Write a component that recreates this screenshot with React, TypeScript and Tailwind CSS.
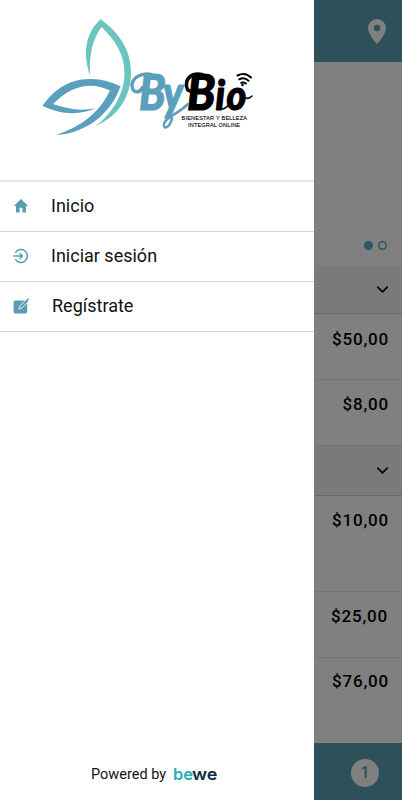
import { ChevronDown } from "lucide-react";

interface Row { price: string; height: string; pad: string; }

const firstGroup: Row[] = [
    { price: "$50,00", height: "h-[66px]", pad: "pt-[13px] pr-[13px]" },
    { price: "$8,00",  height: "h-[66px]", pad: "pt-3 pr-[13px]" },
];

const secondGroup: Row[] = [
    { price: "$10,00", height: "h-24",     pad: "pt-3 pr-[13px]" },
    { price: "$25,00", height: "h-[66px]", pad: "pt-3 pr-3.5" },
    { price: "$76,00", height: "h-[85px]", pad: "pt-[11px] pr-[13px]" },
];

function HomeIcon() {
    return (
        <svg viewBox="0 0 16 16" className="size-4" fill="#5a9db3">
            <path d="M8 1 .8 8H3v6.500h3.600v-4.800h2.800v4.800H13V8h2.200z" />
        </svg>
    );
}

function LoginIcon() {
    return (
        <svg viewBox="0 0 16 16" className="size-4" fill="none" stroke="#5a9db3" strokeWidth="1.5">
            <path d="M2.300 4.800A6.500 6.500 0 1 1 2.300 11.200M.3 8h8.900M6.600 5.200 9.400 8l-2.800 2.800" />
        </svg>
    );
}

function RegisterIcon() {
    return (
        <svg viewBox="0 0 18 18" className="size-[18px]">
            <rect x="1.600" y="3.500" width="13.600" height="13" rx="1.800" fill="#5a9db3" />
            <path d="m6.800 12.200 1.100-3.300 6.600-6.400 2 2-6.500 6.500z" fill="#5a9db3" stroke="#fff" strokeWidth=".8" />
            <path d="m14.400 2.700 1.900-1.500.9.800-1.700 2z" fill="#5a9db3" />
        </svg>
    );
}

function Logo() {
    return (
        <svg viewBox="36 10 224 134" className="ml-9 h-[134px] w-56 shrink-0">
            <path fill="#6cc3bf" d="M100.700 19.300C118 32 131 49 131 72c0 24-12 44-35.500 54C112 114 124.500 94 124.500 73c0-18-9-33-23-46C93 38 88.500 56 90.200 75.500 82 53 86 32 100.700 19.300Z" />
            <path fill="#5aa0be" d="M42.500 105.800C53 91 68 78.500 91 79c11 .2 20 3 29.500 7.200C112 111 89 133 56 135c26-9 43-22 54-44.500-20-10-40-4-57 13.500 14 5 28 7.500 43 4-14 7-35 7.500-53.500-2.200Z" />
            <g fontFamily="Lato, sans-serif" fontStyle="italic" fontWeight="900" strokeWidth="1.200" strokeLinejoin="round">
                <text transform="translate(139 110) scale(.86 1)" fontSize="50" fill="#5aa0be" stroke="#5aa0be">
                    B<tspan x="28" fontSize="47">y</tspan>
                </text>
                <text transform="translate(187 110) scale(.92 1)" fontSize="50" fill="#000" stroke="#000">
                    B<tspan x="31" fontSize="41">i</tspan><tspan x="43" fontSize="41">o</tspan>
                </text>
            </g>
            {/* swashes that lead into each capital, and the joining tails */}
            <g fill="none" strokeLinecap="round">
                <g stroke="#5aa0be">
                    <path d="M151 74.500c-11-2-19 4-19 11 .5 8 8 8 10.500 2" strokeWidth="3.500" />
                    <path d="M172 118c-2 10-9 12-8 6 1-7 13-9 24-20" strokeWidth="2.500" />
                </g>
                <g stroke="#000">
                    <path d="M202 74.500c-11-2-16 4-15.500 11 .5 7 6 7 8.500 2" strokeWidth="3.500" />
                    <path d="M246 98c2 1 4 0 6-2M222 109c3 0 5-2 7-5" strokeWidth="1.500" />
                </g>
            </g>
            <g fill="none" stroke="#000" strokeWidth="2" strokeLinecap="round">
                <path d="M237.500 75.500q7.500-4 13.500 2M239.300 79.300q5-2.500 9.200 1.400M241.300 82.800q2.500-1 4.600 .8" />
            </g>
            <circle cx="242.500" cy="85" r="1.300" />
            <g fontFamily="'Liberation Sans', sans-serif" fontSize="5.500" fill="#000" stroke="#000" strokeWidth=".1">
                <text x="181.500" y="119.500" textLength="65.500">BIENESTAR Y BELLEZA</text>
                <text x="188" y="126.500" textLength="52">INTEGRAL ONLINE</text>
            </g>
        </svg>
    );
}

const menu = [
    { label: "Inicio",         icon: <HomeIcon />,     gap: "pl-[13px] gap-[22px]" },
    { label: "Iniciar sesión", icon: <LoginIcon />,    gap: "pl-[13px] gap-[22px]" },
    { label: "Regístrate",     icon: <RegisterIcon />, gap: "pl-3 gap-[22px]" },
];

function PriceRow({ row }: { row: Row }) {
    return (
        <div className={`${row.height} ${row.pad} shrink-0 border-b border-[#757575] text-right text-[17px] leading-6 font-medium tracking-[0.800px] text-black last-of-type:border-b-0`}>
            {row.price}
        </div>
    );
}

function SectionBar({ height }: { height: string }) {
    return (
        <div className={`${height} flex shrink-0 items-center justify-end border-b border-[#686868] bg-[#7a7a7a] pr-2.5`}>
            <ChevronDown size={19} color="#000" strokeWidth={2.1} />
        </div>
    );
}

export default function App() {
    return (
        <div className="flex h-[800px] w-[402px] overflow-hidden bg-white font-[Roboto,sans-serif]">
            <aside className="flex w-[314px] shrink-0 flex-col bg-white">
                <div className="flex h-[182px] flex-col border-b-2 border-[#e4e4e4] pt-2.5">
                    <Logo />
                </div>
                <nav>
                    {menu.map(item => (
                        <a key={item.label} className={`flex h-[50px] items-center border-b border-[#d8d8d8] pb-px text-lg text-[#111] ${item.gap}`}>
                            {item.icon}
                            <span>{item.label}</span>
                        </a>
                    ))}
                </nav>
                <div className="mt-auto mb-[13px] flex h-6 items-center pl-[91px] text-[14.500px] text-[#111]">
                    <span className="w-[82px] whitespace-nowrap">Powered by</span>
                    <svg viewBox="0 0 46 22" className="h-[22px] w-[46px]" fontFamily="Inter, sans-serif" fontWeight="600" fontSize="16.500">
                        <text x="0" y="15.800" fill="#26afb7" textLength="20" lengthAdjust="spacingAndGlyphs">be</text>
                        <text x="19" y="15.800" fill="#0b2b45" textLength="25.500" lengthAdjust="spacingAndGlyphs">we</text>
                    </svg>
                </div>
            </aside>

            {/* page behind the drawer, dimmed */}
            <main className="flex min-w-0 flex-1 flex-col bg-[#808080]">
                <header className="flex h-[62px] shrink-0 justify-end bg-[#2d505b] pt-[19px] pr-4">
                    <svg viewBox="0 0 18 25" className="h-[25px] w-[18px]">
                        <path fill="#808080" fillRule="evenodd" d="M9 0a9 9 0 0 0-9 9c0 6.500 9 16 9 16s9-9.500 9-16a9 9 0 0 0-9-9m0 5.800a3.200 3.200 0 1 1 0 6.400 3.200 3.200 0 0 1 0-6.400" />
                    </svg>
                </header>
                <div className="flex h-[203px] shrink-0 items-end justify-end gap-[5px] pr-[15px] pb-[15px]">
                    <span className="size-[9px] rounded-full bg-[#2d5664]" />
                    <svg viewBox="0 0 9 9" className="size-[9px]">
                        <circle cx="4.500" cy="4.500" r="3.700" fill="none" stroke="#2d5664" strokeWidth="1.500" />
                    </svg>
                </div>
                <SectionBar height="h-[49px]" />
                {firstGroup.map(row => <PriceRow key={row.price} row={row} />)}
                <SectionBar height="h-[50px]" />
                {secondGroup.map(row => <PriceRow key={row.price} row={row} />)}
                <footer className="flex flex-1 items-center justify-end bg-[#2d505b] pt-[3px] pr-[23px]">
                    <span className="flex size-7 items-center justify-center rounded-full bg-[#808080] text-base font-medium text-[#2d505b]">1</span>
                </footer>
            </main>
        </div>
    );
}
